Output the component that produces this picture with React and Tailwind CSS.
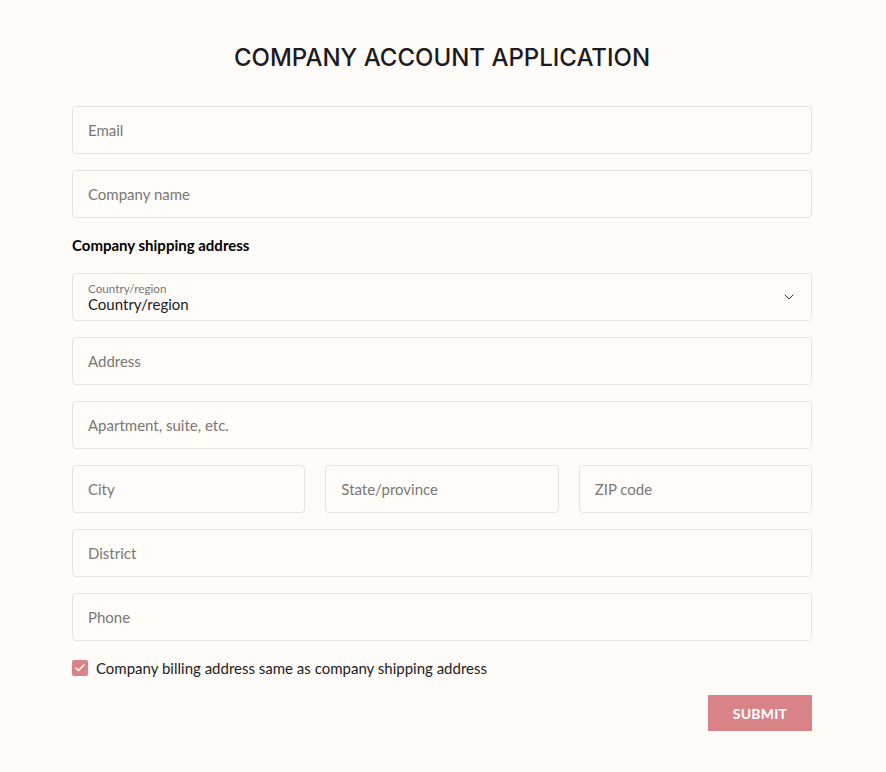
import React, { useState } from 'react';
import { ChevronDown, Check } from 'lucide-react';

const body = { fontFamily: 'Lato, "Noto Sans", sans-serif' };
const heading = { fontFamily: 'Inter, Roboto, sans-serif' };

function Field({ placeholder }) {
    return (
        <input
            type="text"
            placeholder={placeholder}
            className="h-12 w-full rounded-[4px] border border-[#e6e3e0] bg-[#fffcf9] px-[15px] text-[15px] text-[#222] placeholder:text-[#7a7775] outline-none"
        />
    );
}

export default function App() {
    const [same, setSame] = useState(true);

    return (
        <div className="min-h-[772px] w-full bg-[#fffbf8] text-[#1c1b1f]" style={body}>
            <div className="ml-[72px] w-[740px] pt-[43px]">
                <h1 className="text-center text-[24px] font-medium leading-[30px]" style={heading}>
                    COMPANY ACCOUNT APPLICATION
                </h1>

                <form className="mt-[33px] flex flex-col" onSubmit={(e) => e.preventDefault()}>
                    <div className="flex flex-col gap-4">
                        <Field placeholder="Email" />
                        <Field placeholder="Company name" />
                    </div>

                    <p className="mt-[17px] text-[15px] font-bold leading-5 text-black">Company shipping address</p>

                    <div className="mt-[18px] flex flex-col gap-4">
                        <div className="relative flex h-12 w-full flex-col justify-center rounded-[4px] border border-[#e6e3e0] bg-[#fffcf9] px-[15px]">
                            <span className="text-[11.7px] leading-[13px] text-[#7a7775]">Country/region</span>
                            <span className="text-[15px] leading-[18px] text-[#1c1b1f]">Country/region</span>
                            <ChevronDown className="absolute right-[14px] top-1/2 h-4 w-4 -translate-y-1/2 text-[#333]" strokeWidth={1.5} />
                        </div>
                        <Field placeholder="Address" />
                        <Field placeholder="Apartment, suite, etc." />
                        <div className="grid grid-cols-3 gap-5">
                            <Field placeholder="City" />
                            <Field placeholder="State/province" />
                            <Field placeholder="ZIP code" />
                        </div>
                        <Field placeholder="District" />
                        <Field placeholder="Phone" />
                    </div>

                    <label className="mt-[17px] flex cursor-pointer items-center gap-2">
                        <span
                            onClick={() => setSame(!same)}
                            className={`flex h-4 w-4 items-center justify-center rounded-[2px] ${same ? 'bg-[#d98389]' : 'border border-[#ccc]'}`}
                        >
                            {same && <Check className="h-3 w-3 text-white" strokeWidth={3} />}
                        </span>
                        <span className="text-[15px] leading-5 text-[#1c1b1f]">
                            Company billing address same as company shipping address
                        </span>
                    </label>

                    <div className="mt-[17px] flex justify-end">
                        <button
                            type="submit"
                            className="h-9 w-[104px] bg-[#d98389] text-[14px] font-bold tracking-[0.2px] text-white"
                        >
                            SUBMIT
                        </button>
                    </div>
                </form>
            </div>
        </div>
    );
}
